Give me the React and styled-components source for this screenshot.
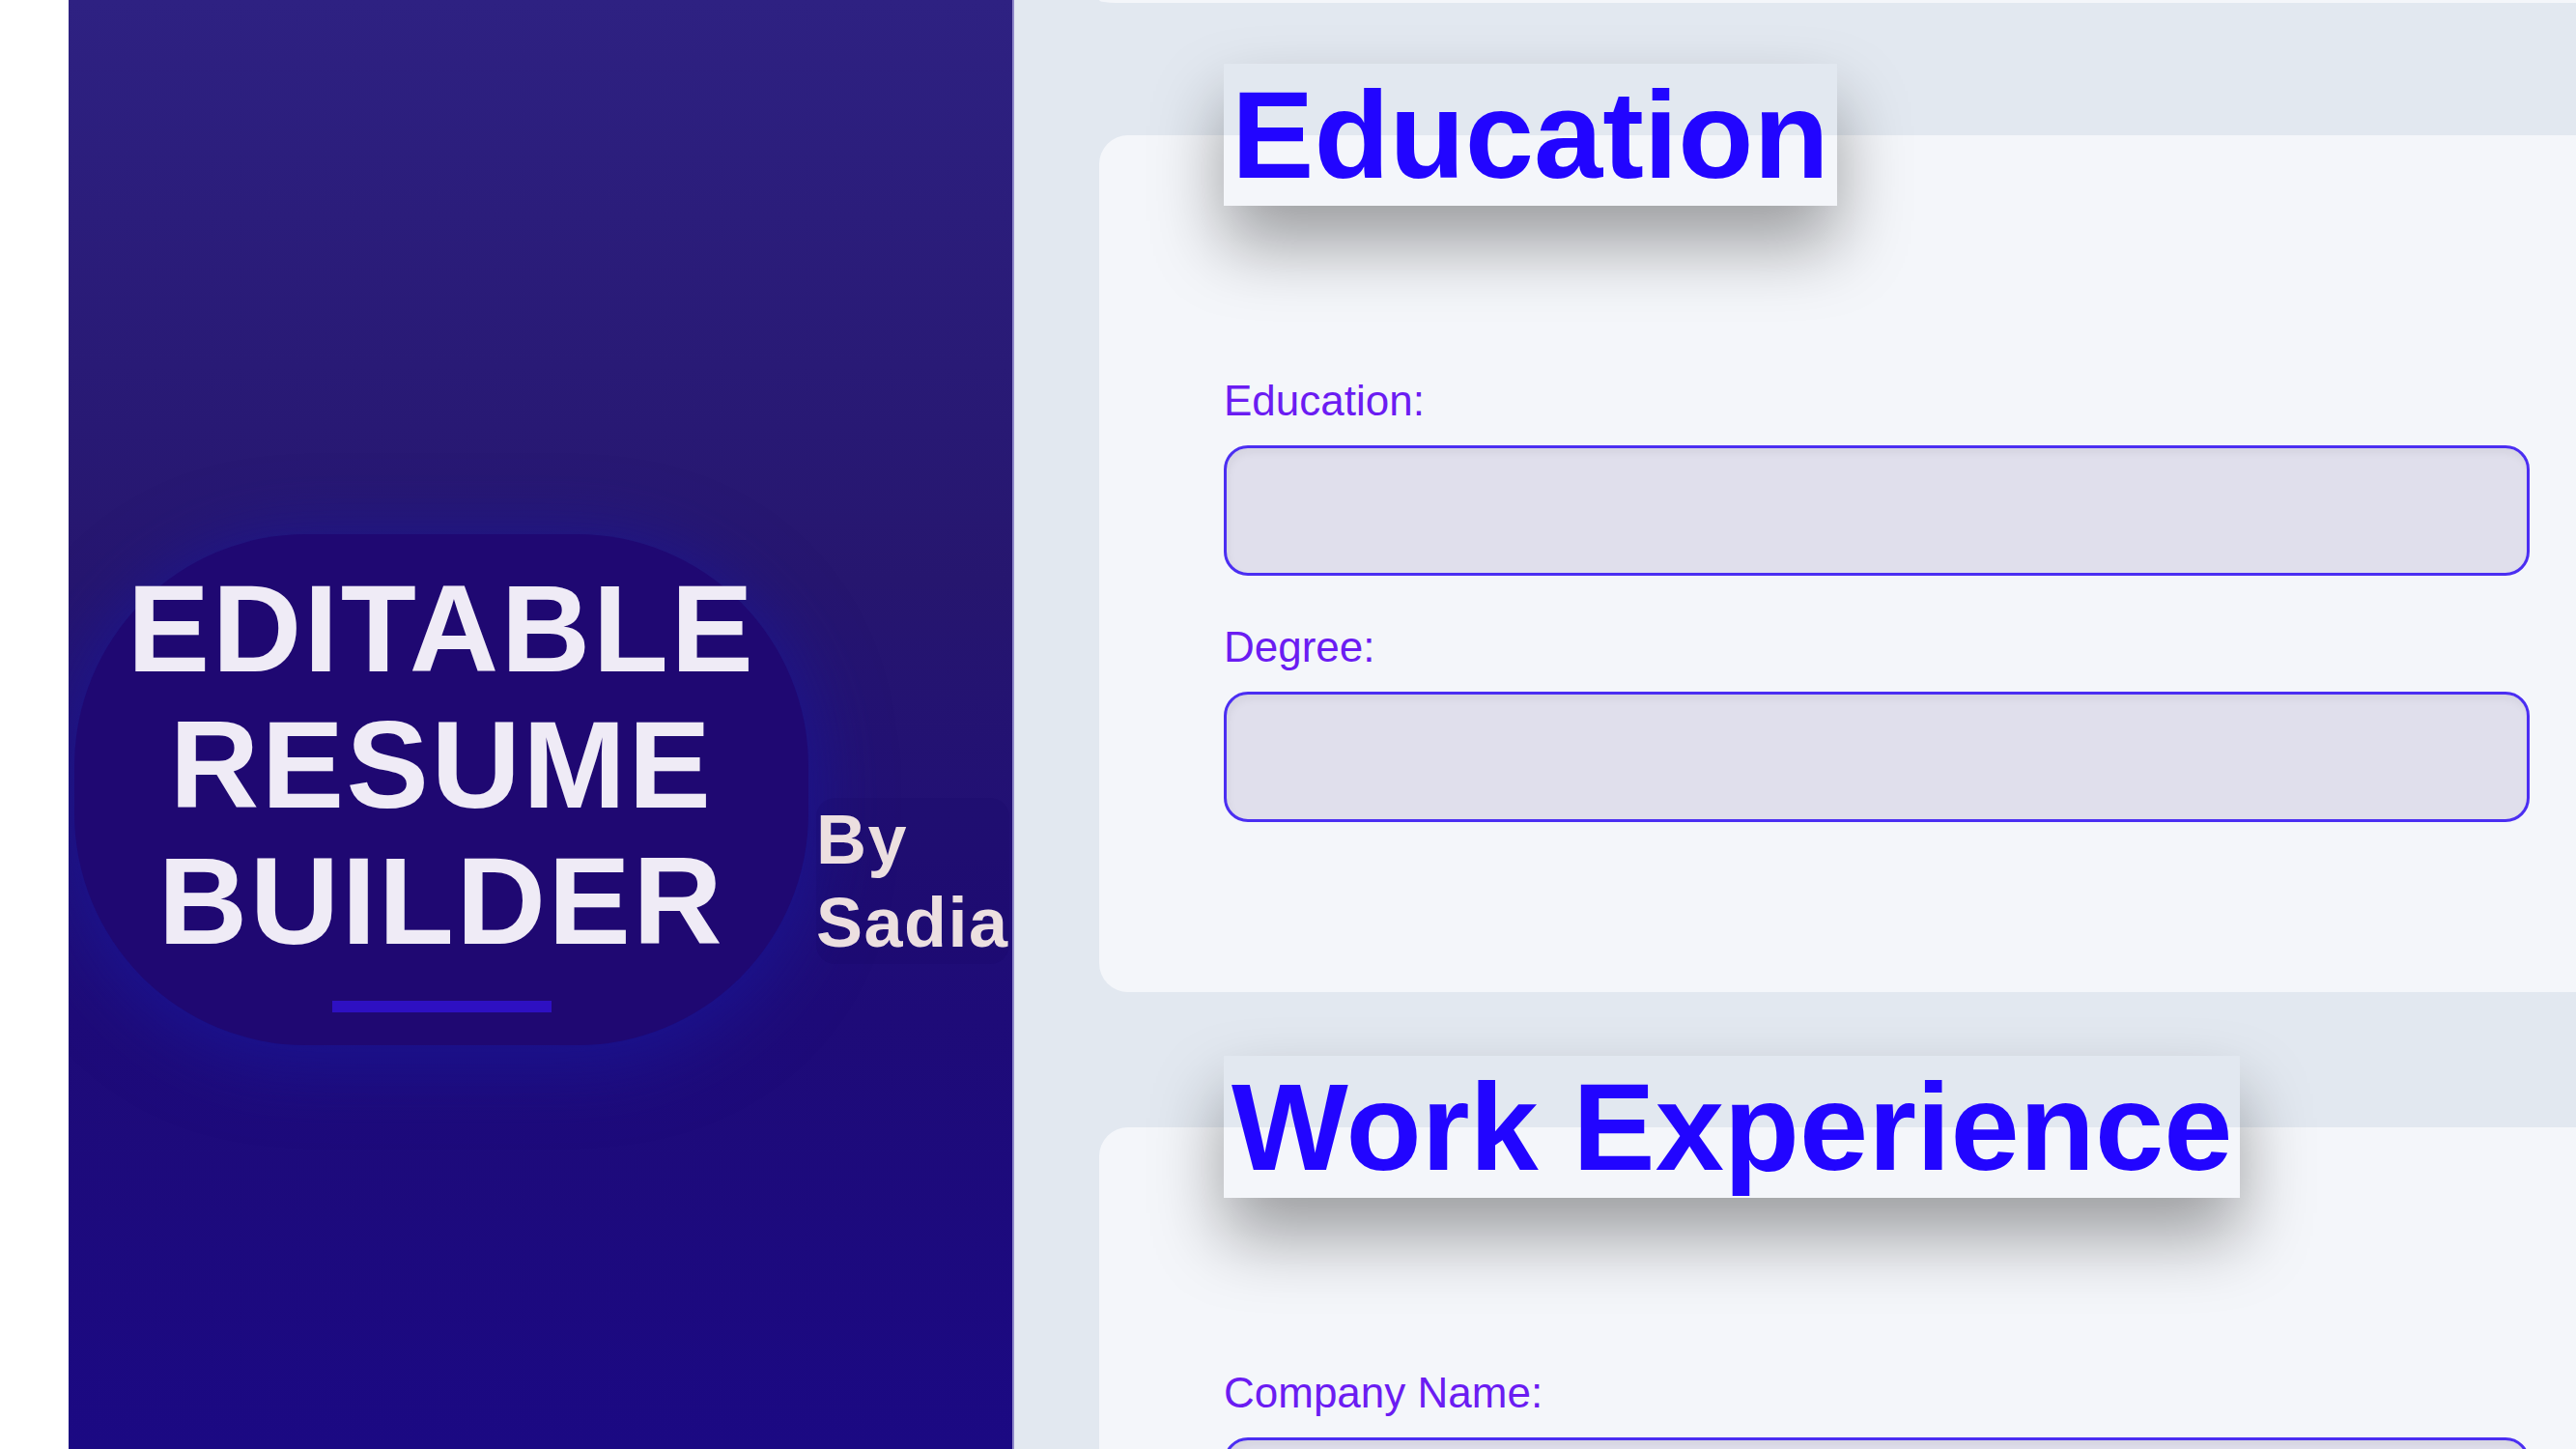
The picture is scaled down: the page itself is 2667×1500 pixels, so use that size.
import React from "react";
import styled, { createGlobalStyle } from "styled-components";

const GlobalStyle = createGlobalStyle`
  html, body, #root {
    margin: 0;
    padding: 0;
    height: 100%;
  }
  body {
    overflow: hidden;
    background: #ffffff;
    font-family: "Liberation Sans", Arial, sans-serif;
  }
  * {
    box-sizing: border-box;
  }
`;

const Page = styled.div`
  display: flex;
  height: 100vh;
  padding-left: 71px;
  background: #ffffff;
  overflow: hidden;
`;

const Sidebar = styled.aside`
  flex: 0 0 979px;
  padding: 553px 0 0 6px;
  background: linear-gradient(
    180deg,
    #2e2182 0%,
    #26166f 40%,
    #1e0b78 70%,
    #1b0983 100%
  );
  border-right: 2px solid #8f88c9;
  overflow: hidden;
`;

const TitleRow = styled.div`
  display: flex;
  align-items: flex-end;
`;

const TitleBlob = styled.h1`
  flex: 0 0 760px;
  margin: 0;
  padding: 28px 0 34px;
  border-radius: 240px;
  background: #1f0872;
  box-shadow: 0 12px 70px 12px rgba(26, 22, 150, 0.75);
  color: #efebf6;
  font-size: 128px;
  font-weight: 700;
  line-height: 1.1;
  letter-spacing: 2.5px;
  text-align: center;
`;

const TitleBar = styled.span`
  display: block;
  width: 227px;
  height: 12px;
  margin: 33px auto 0;
  background: #2e10c2;
`;

const Byline = styled.div`
  flex-shrink: 0;
  margin: 0 0 84px 8px;
  border-radius: 20px;
  background: rgba(24, 4, 100, 0.18);
  color: #ecdfe0;
  font-size: 72px;
  font-weight: 700;
  line-height: 1.2;
  letter-spacing: 1.5px;
`;

const Main = styled.main`
  flex: 1;
  display: flex;
  flex-direction: column;
  padding-left: 88px;
  background: #e2e8f0;
  overflow: hidden;
`;

const CardEdge = styled.div`
  flex-shrink: 0;
  width: calc(100% + 81px);
  height: 3px;
  background: #f4f6fa;
  border-bottom-left-radius: 17px 3px;
`;

const Card = styled.section`
  flex-shrink: 0;
  display: flex;
  flex-direction: column;
  width: calc(100% + 81px);
  margin-top: ${(props) => props.gap}px;
  padding: 0 129px 176px;
  border-radius: 30px;
  background: #f4f6fa;
`;

const SectionTitle = styled.h2`
  align-self: flex-start;
  margin: -74px 0 177px;
  padding: 0 8px;
  color: #2205ff;
  font-size: 128px;
  font-weight: 700;
  line-height: normal;
  box-shadow: 0 40px 72px rgba(0, 0, 0, 0.36);
`;

const Field = styled.div`
  display: flex;
  flex-direction: column;
  & + & {
    margin-top: 49px;
  }
`;

const Label = styled.label`
  display: block;
  margin-bottom: 21px;
  color: #6b1cf2;
  font-size: 44px;
  line-height: normal;
`;

const Input = styled.input`
  height: 135px;
  width: 100%;
  padding: 0 24px;
  border: 3px solid #4b2ef2;
  border-radius: 25px;
  background: #e0dfec;
  box-shadow: inset 2px 5px 8px rgba(0, 0, 0, 0.05);
  font-family: "Liberation Sans", Arial, sans-serif;
  font-size: 40px;
  outline: none;
`;

const sections = [
  { title: "Education", gap: 137, fields: ["Education:", "Degree:"] },
  { title: "Work Experience", gap: 140, fields: ["Company Name:", "Position:"] },
];

const App = () => {
  return (
    <>
      <GlobalStyle />
      <Page>
        <Sidebar>
          <TitleRow>
            <TitleBlob>
              EDITABLE
              <br />
              RESUME
              <br />
              BUILDER
              <TitleBar />
            </TitleBlob>
            <Byline>
              By
              <br />
              Sadia
            </Byline>
          </TitleRow>
        </Sidebar>
        <Main>
          <CardEdge />
          {sections.map((section) => (
            <Card key={section.title} gap={section.gap}>
              <SectionTitle>{section.title}</SectionTitle>
              {section.fields.map((field) => (
                <Field key={field}>
                  <Label>{field}</Label>
                  <Input type="text" />
                </Field>
              ))}
            </Card>
          ))}
        </Main>
      </Page>
    </>
  );
};

export default App;
